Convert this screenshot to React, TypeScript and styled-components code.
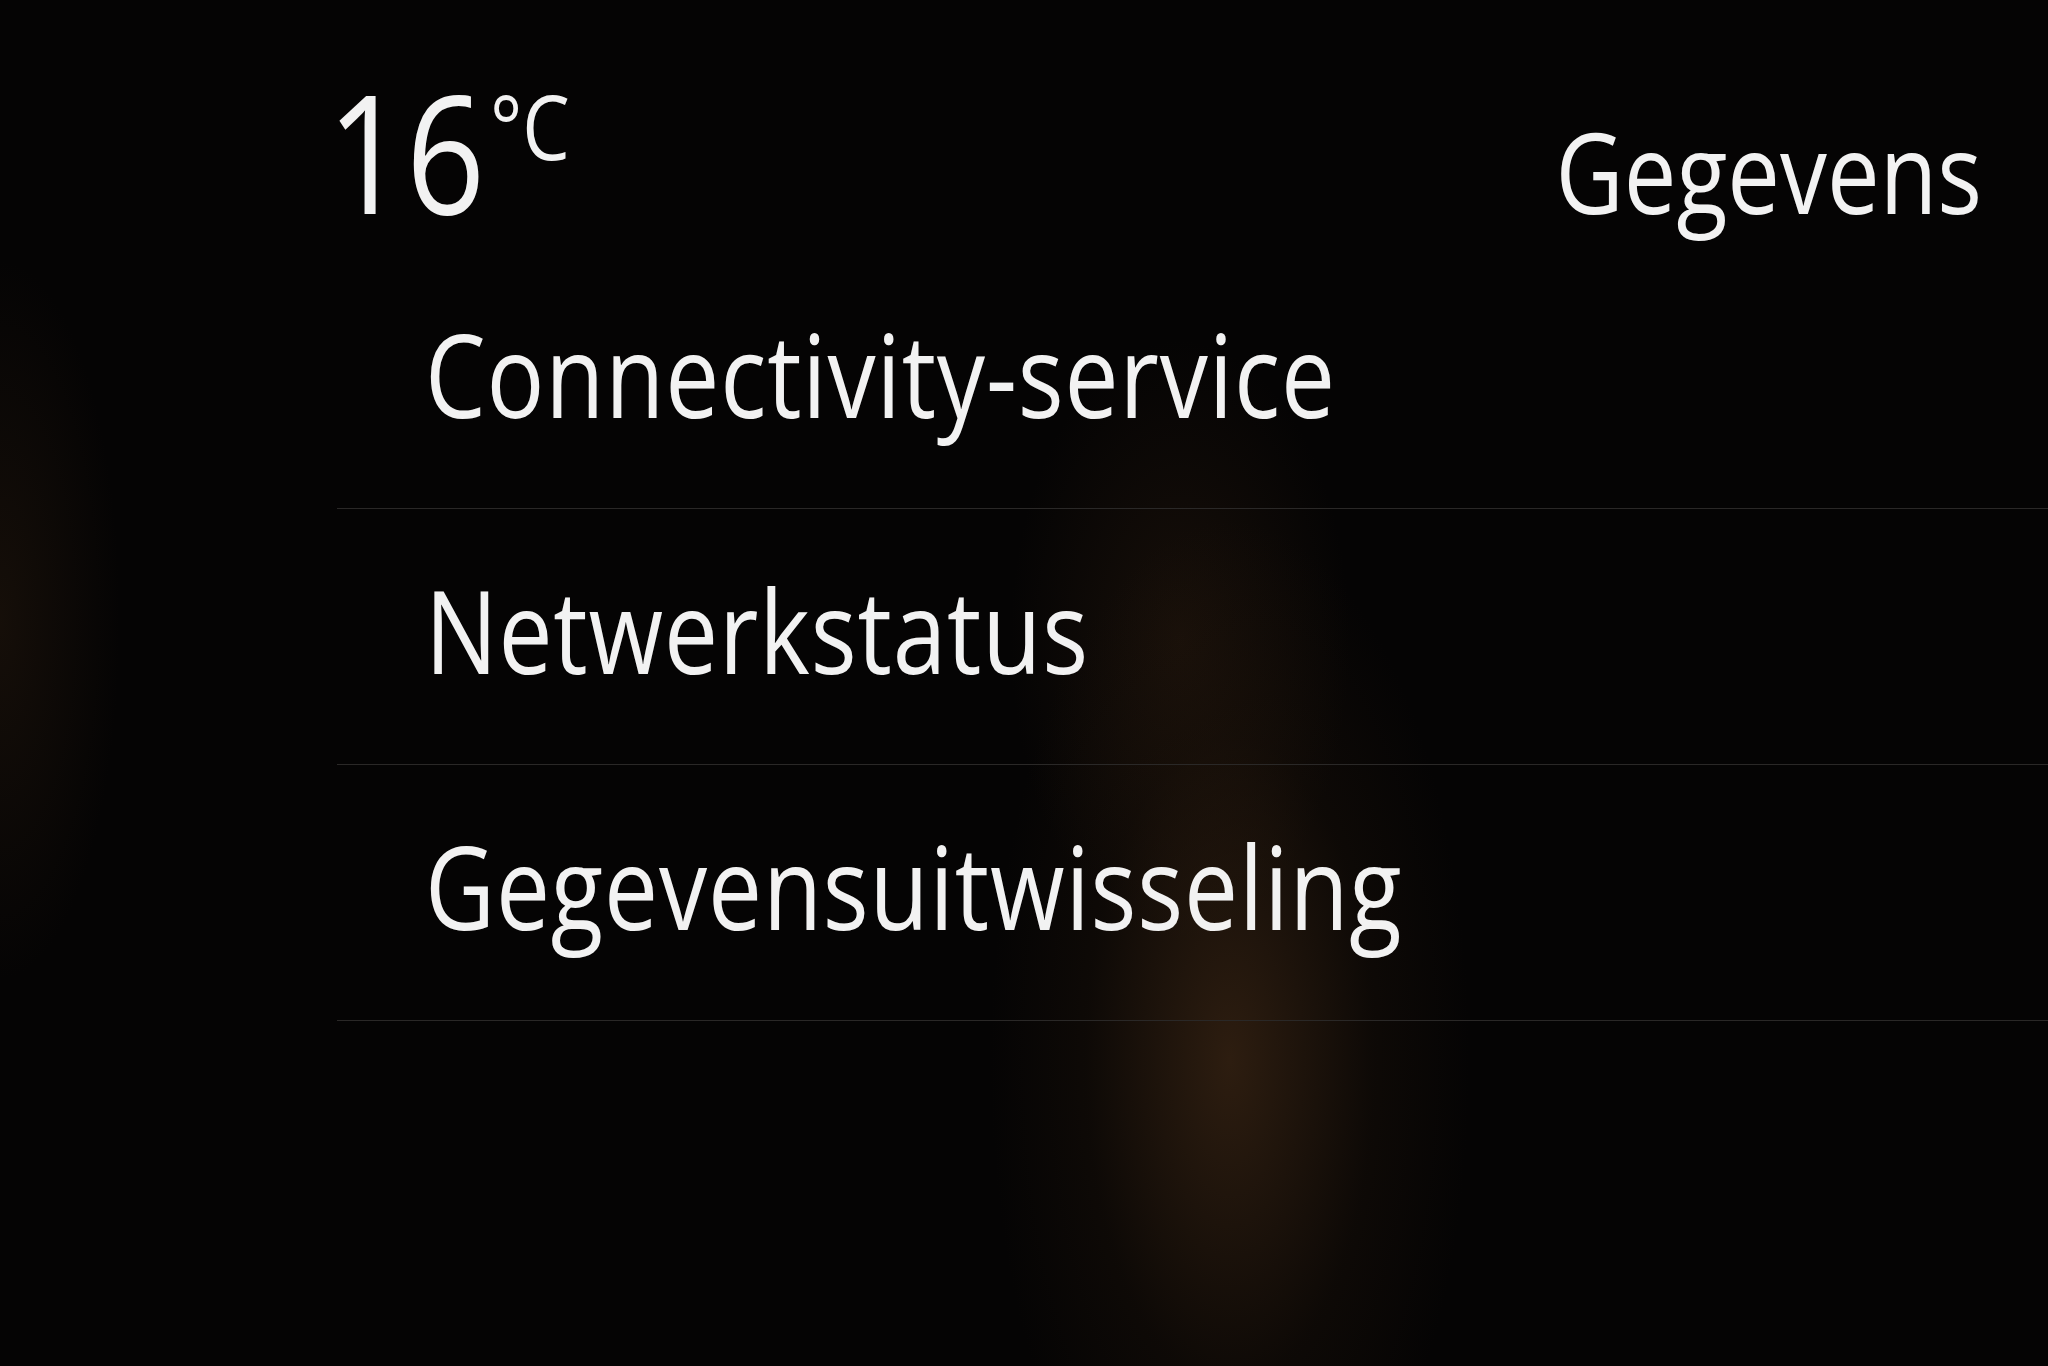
import styled, { createGlobalStyle } from 'styled-components';

const GlobalStyle = createGlobalStyle`
  html, body {
    margin: 0;
    padding: 0;
    background: #050404;
  }
  body {
    font-family: "Open Sans", "Noto Sans", "DejaVu Sans", sans-serif;
    color: #f2f2f2;
  }
`;

const Screen = styled.div`
  width: 2048px;
  height: 1366px;
  box-sizing: border-box;
  padding-left: 337px;
  overflow: hidden;
  background:
    radial-gradient(ellipse 240px 540px at 1230px 1060px, rgba(72, 46, 24, 0.6), rgba(44, 28, 14, 0.22) 60%, transparent 100%),
    radial-gradient(ellipse 170px 300px at 1180px 640px, rgba(54, 34, 18, 0.38), transparent 100%),
    radial-gradient(ellipse 120px 360px at 0px 620px, rgba(46, 30, 16, 0.4), transparent 100%),
    #050404;
`;

const Header = styled.header`
  height: 253px;
  box-sizing: border-box;
  padding-top: 68px;
  padding-right: 66px;
  display: flex;
  justify-content: space-between;
  align-items: baseline;
`;

// the screen font is a narrow humanist sans: Open Sans squeezed horizontally
const Narrow = styled.span<{ $origin?: 'left' | 'right' }>`
  display: inline-block;
  transform: scaleX(0.838);
  transform-origin: ${(p) => p.$origin ?? 'left'} center;
`;

const Temperature = styled.div`
  font-size: 165px;
  line-height: 1;
  margin-left: -10px;
  display: flex;
  align-items: flex-start;
`;

const Unit = styled.span`
  font-size: 90px;
  line-height: 1;
  margin-left: -26px;
  margin-top: 12px;
`;

const Title = styled.div`
  font-size: 112px;
  line-height: 1;
`;

const Menu = styled.ul`
  list-style: none;
  margin: 0;
  padding: 0;
`;

const MenuItem = styled.li`
  height: 256px;
  box-sizing: border-box;
  border-bottom: 1px solid #2a2827;
  padding-left: 88px;
  padding-bottom: 14px;
  display: flex;
  align-items: center;
  font-size: 115px;
  letter-spacing: 1px;
  line-height: normal;
  white-space: nowrap;
`;

const items = ['Connectivity-service', 'Netwerkstatus', 'Gegevensuitwisseling'];

export default function App() {
  return (
    <>
      <GlobalStyle />
      <Screen>
        <Header>
          <Temperature>
            <Narrow>16</Narrow>
            <Unit>
              <Narrow>°C</Narrow>
            </Unit>
          </Temperature>
          <Title>
            <Narrow $origin="right">Gegevens</Narrow>
          </Title>
        </Header>
        <Menu>
          {items.map((label) => (
            <MenuItem key={label}>
              <Narrow>{label}</Narrow>
            </MenuItem>
          ))}
        </Menu>
      </Screen>
    </>
  );
}
